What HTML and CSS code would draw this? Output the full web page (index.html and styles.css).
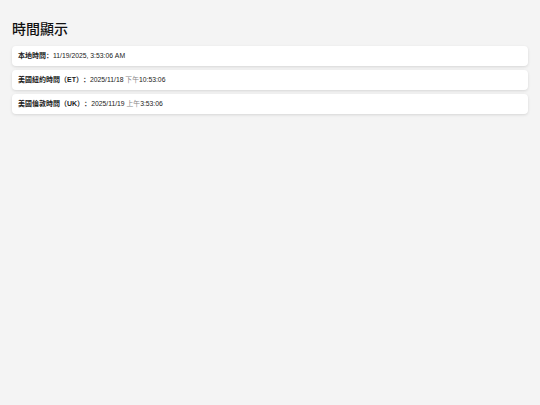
FILE: index.html
```html
<!DOCTYPE html>
<html lang="zh">
<head>
<meta charset="utf-8">
<title>時間顯示</title>
<link rel="stylesheet" href="styles.css">
</head>
<body>
<main class="page">
  <h1 class="title">時間顯示</h1>
  <div class="list">
    <div class="card"><span class="label">本地時間：</span><span class="value">11/19/2025, 3:53:06 AM</span></div>
    <div class="card"><span class="label">美國紐約時間（ET）：</span><span class="value">2025/11/18 <span class="muted">下午</span>10:53:06</span></div>
    <div class="card"><span class="label">美國倫敦時間（UK）：</span><span class="value">2025/11/19 <span class="muted">上午</span>3:53:06</span></div>
  </div>
</main>
</body>
</html>
```
FILE: styles.css
```css
html, body {
  margin: 0;
  padding: 0;
  background: #f4f4f4;
}
body {
  font-family: "Liberation Sans", Arial, "Noto Sans CJK SC", sans-serif;
  color: #1a1a1a;
  text-spacing-trim: space-all;
}
.page {
  padding: 12px;
}
.title {
  margin: 8px 0 8px;
  font-size: 14px;
  font-weight: 500;
  line-height: 18px;
  color: #111;
}
.list {
  display: flex;
  flex-direction: column;
  gap: 4px;
}
.card {
  background: #fff;
  border-radius: 4px;
  box-shadow: 0 1px 3px rgba(0,0,0,0.12);
  padding: 6px 6px;
  font-size: 7px;
  line-height: 8px;
}
.label {
  font-weight: bold;
}
.value {
  font-size: 6.8px;
}
.muted {
  color: #888;
}
```
